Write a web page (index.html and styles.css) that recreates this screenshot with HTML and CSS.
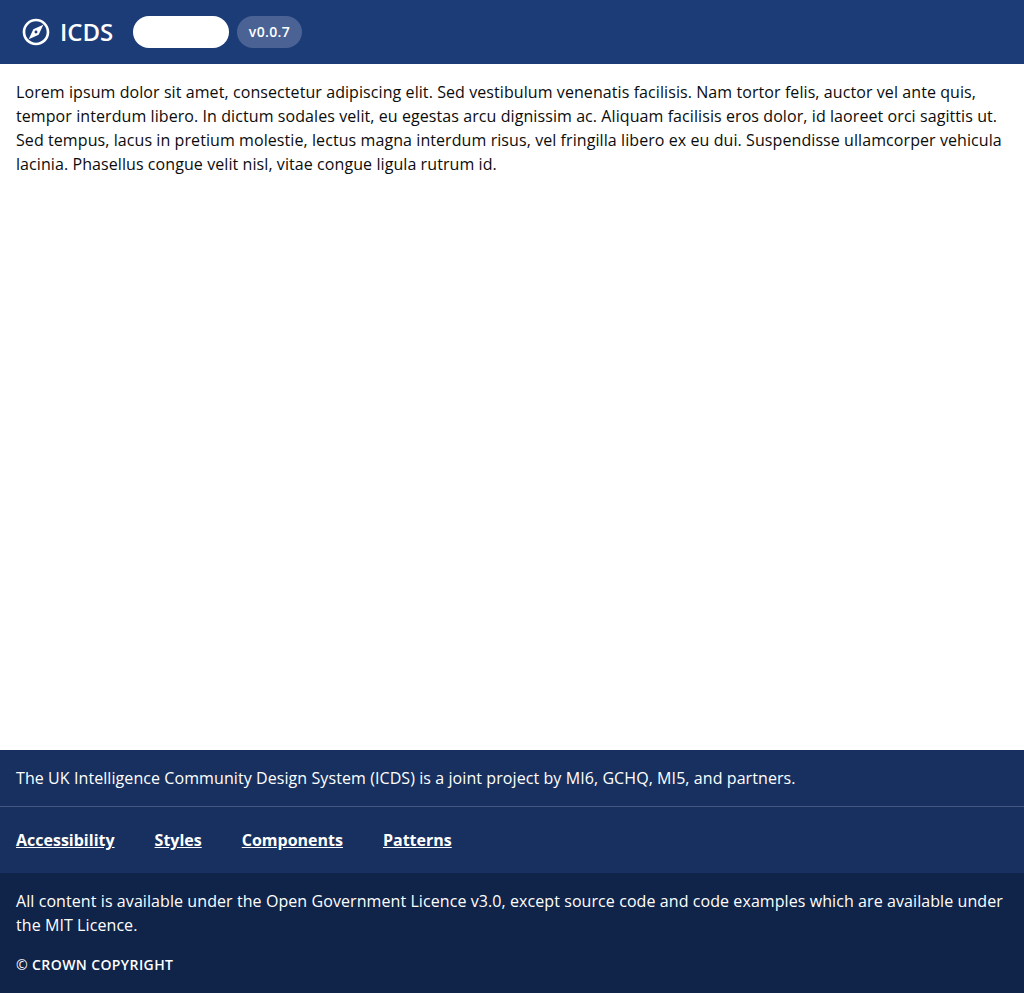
FILE: index.html
```html
<!DOCTYPE html>
<html lang="en">
<head>
<meta charset="utf-8">
<title>ICDS</title>
<link rel="stylesheet" href="styles.css">
</head>
<body>
<header class="top-bar">
  <a class="brand">
    <svg class="brand-icon" viewBox="0 0 24 24" fill="currentColor" aria-hidden="true"><path d="M12 2C6.480 2 2 6.480 2 12s4.480 10 10 10 10-4.480 10-10S17.520 2 12 2zm0 18c-4.410 0-8-3.590-8-8s3.590-8 8-8 8 3.590 8 8-3.590 8-8 8zm-5.500-2.500l7.510-3.490L17.500 6.500 9.990 9.990 6.500 17.500zm5.500-6.600c.610 0 1.100.490 1.100 1.100s-.490 1.100-1.100 1.100-1.100-.490-1.100-1.100.490-1.100 1.100-1.100z"/></svg>
    <span class="brand-title">ICDS</span>
  </a>
  <div class="tags">
    <span class="tag tag-status"></span>
    <span class="tag tag-version">v0.0.7</span>
  </div>
</header>
<main class="content">
  <p class="text">Lorem ipsum dolor sit amet, consectetur adipiscing elit. Sed vestibulum venenatis facilisis. Nam tortor felis, auctor vel ante quis, tempor interdum libero. In dictum sodales velit, eu egestas arcu dignissim ac. Aliquam facilisis eros dolor, id laoreet orci sagittis ut. Sed tempus, lacus in pretium molestie, lectus magna interdum risus, vel fringilla libero ex eu dui. Suspendisse ullamcorper vehicula lacinia. Phasellus congue velit nisl, vitae congue ligula rutrum id.</p>
</main>
<footer class="footer">
  <div class="footer-description"><p class="text">The UK Intelligence Community Design System (ICDS) is a joint project by MI6, GCHQ, MI5, and partners.</p></div>
  <nav class="footer-links">
    <a class="link">Accessibility</a>
    <a class="link">Styles</a>
    <a class="link">Components</a>
    <a class="link">Patterns</a>
  </nav>
  <div class="footer-legal">
    <p class="text">All content is available under the Open Government Licence v3.0, except source code and code examples which are available under the MIT Licence.</p>
    <p class="copyright"><span class="copyright-sign">©</span> Crown Copyright</p>
  </div>
</footer>
</body>
</html>
```

FILE: styles.css
```css
* { box-sizing: border-box; }
body {
  margin: 0;
  min-height: 100vh;
  display: flex;
  flex-direction: column;
  background: #fff;
  color: #0b0c0c;
  font: 400 16px/24px "Open Sans", sans-serif;
  letter-spacing: 0.08px;
}
p { margin: 0; }
.top-bar {
  display: flex;
  align-items: center;
  gap: 20px;
  height: 64px;
  padding: 0 20px;
  background: #1c3c78;
  color: #fff;
}
.brand { display: flex; align-items: center; gap: 8px; }
.brand-icon { width: 32px; height: 32px; }
.brand-title { width: 53px; font-size: 24px; line-height: 32px; font-weight: 600; letter-spacing: -0.05px; }
.tags { display: flex; gap: 8px; }
.tag { height: 32px; border-radius: 16px; font-size: 14px; line-height: 32px; font-weight: 600; letter-spacing: 0.35px; }
.tag-status { width: 96px; background: #fff; }
.tag-version { width: 65px; text-align: center; background: #4a6394; }
.content { flex: 1; padding: 16px; }
.footer { color: #fff; background: #17305f; }
.footer-description { padding: 16px; border-bottom: 1px solid #455980; }
.footer-links { display: flex; gap: 40px; height: 66px; align-items: center; padding: 0 16px; }
.link { font-weight: 700; letter-spacing: 0; text-decoration: underline; }
.footer-legal { padding: 16px; height: 120px; background: #102349; }
.copyright { margin-top: 16px; font-size: 14px; font-weight: 600; letter-spacing: 0.4px; text-transform: uppercase; }
.copyright-sign { font-weight: 400; }
```
